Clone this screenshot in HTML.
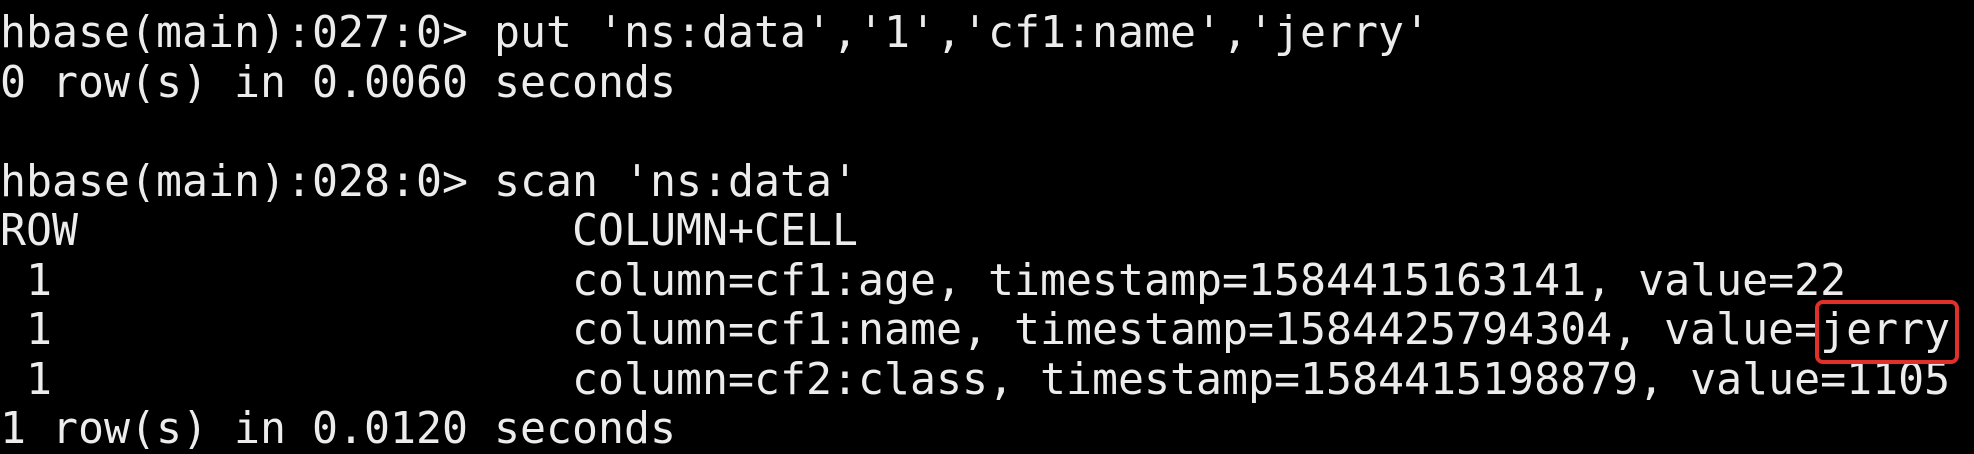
<!DOCTYPE html>
<html><head><style>
html,body{margin:0;padding:0;background:#000;width:1974px;height:454px;overflow:hidden}
pre{margin:0;padding:9px 0 0 0;font-family:"DejaVu Sans Mono","Liberation Mono",monospace;font-size:43.2px;line-height:49.5px;color:#ececec;white-space:pre}
.box{position:absolute;left:1815px;top:300px;width:136px;height:56px;border:4px solid #e0302a;border-radius:8px}
</style></head><body>
<pre>hbase(main):027:0&gt; put 'ns:data','1','cf1:name','jerry'
0 row(s) in 0.0060 seconds

hbase(main):028:0&gt; scan 'ns:data'
ROW                   COLUMN+CELL
 1                    column=cf1:age, timestamp=1584415163141, value=22
 1                    column=cf1:name, timestamp=1584425794304, value=jerry
 1                    column=cf2:class, timestamp=1584415198879, value=1105
1 row(s) in 0.0120 seconds</pre>
<div class="box"></div>
</body></html>
